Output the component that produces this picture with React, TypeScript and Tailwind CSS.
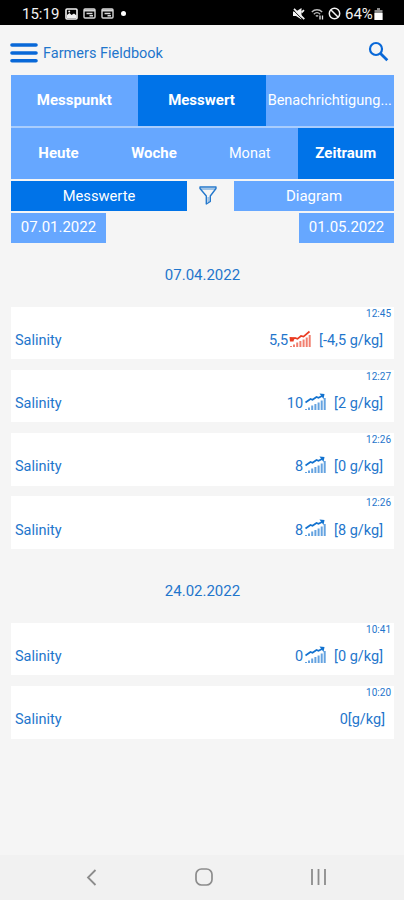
import { clsx } from 'clsx';

type Reading = {
  time: string;
  value: string;
  unit: string;
  trend?: 'up' | 'down';
};

const GROUPS: { date: string; readings: Reading[] }[] = [
  {
    date: '07.04.2022',
    readings: [
      { time: '12:45', value: '5,5', unit: '[-4,5 g/kg]', trend: 'down' },
      { time: '12:27', value: '10', unit: '[2 g/kg]', trend: 'up' },
      { time: '12:26', value: '8', unit: '[0 g/kg]', trend: 'up' },
      { time: '12:26', value: '8', unit: '[8 g/kg]', trend: 'up' },
    ],
  },
  {
    date: '24.02.2022',
    readings: [
      { time: '10:41', value: '0', unit: '[0 g/kg]', trend: 'up' },
      { time: '10:20', value: '0', unit: '[g/kg]' },
    ],
  },
];

function WindowIcon() {
  return (
    <svg width="13" height="11" viewBox="0 0 13 11" fill="none" stroke="#d8d8d8" strokeWidth="1.4">
      <rect x="1" y="1" width="11" height="9" rx="1" />
      <path d="M1 2.500h11" strokeWidth="2" />
      <path d="M3.500 5.500h6M6.500 7.700h3.500" />
    </svg>
  );
}

function StatusBar() {
  return (
    <div className="flex h-[25px] shrink-0 items-center justify-between bg-black pt-[2px] pr-[20px] pl-[22px] text-[#f2f2f2]">
      <div className="flex items-center">
        <span className="w-[43px] pt-[2px] text-[15px] leading-none">15:19</span>
        <svg width="13" height="12" viewBox="0 0 13 12" className="mr-[5px]">
          <rect x="1" y="1" width="11" height="10" rx="1" fill="none" stroke="#f2f2f2" strokeWidth="1.6" />
          <path d="M2 10V7l2.500-2 2 2L9 5.500l2.500 2V10z" fill="#f2f2f2" />
          <circle cx="4.200" cy="3.500" r="1" fill="#f2f2f2" />
        </svg>
        <span className="mr-[5px]"><WindowIcon /></span>
        <WindowIcon />
        <span className="ml-[7px] size-[5px] rounded-full bg-white" />
      </div>
      <div className="flex items-center">
        <svg width="12" height="12" viewBox="0 0 12 12" className="mr-[6px]">
          <path d="M0 3.500h3L8.500 0v11.500L3 8H0z" fill="#f2f2f2" />
          <path d="M0 1.800l10.400 10.400" stroke="#000" strokeWidth="1" />
          <path d="M1 .8l10.300 10.300M8.500 4.500L11 2.200" stroke="#f2f2f2" strokeWidth="1.700" />
        </svg>
        <svg width="13" height="12" viewBox="0 0 13 12" className="mr-[4px]" fill="none" stroke="#bdbdbd" strokeWidth="1.300">
          <path d="M.8 4C3.800 1 8.200 1 11.200 4M2.800 6.200c2-1.900 4.400-1.900 6.400 0M4.800 8.300c.8-.7 1.600-.7 2.400 0" />
          <path d="M9 7.500v4M11.500 7.500v4" stroke="#e8e8e8" />
        </svg>
        <svg width="13" height="13" viewBox="0 0 13 13" className="mr-[4px]" fill="none" stroke="#f2f2f2" strokeWidth="1.500">
          <circle cx="6.500" cy="6.500" r="5.200" />
          <path d="M3 3l7 7" />
        </svg>
        <span className="w-[29px] pt-[2px] text-[15px] leading-none">64%</span>
        <svg width="9" height="12" viewBox="0 0 9 12" className="mr-px">
          <path d="M3 0h3v2h2.500v10h-8V2H3z" fill="#8d8d8d" />
          <path d="M.5 5h8v7h-8z" fill="#fff" />
        </svg>
      </div>
    </div>
  );
}

function Header() {
  return (
    <header className="flex h-[50px] shrink-0 items-center pt-[5px] pr-[15px] pl-[10px]">
      <svg width="28" height="20" viewBox="0 0 28 20" stroke="#0868d8" strokeWidth="3.600" strokeLinecap="round">
        <path d="M2 2h24M2 10h24M2 17.700h24" />
      </svg>
      <h1 className="ml-[5px] flex-1 pt-[3px] text-[14.500px]">Farmers Fieldbook</h1>
      <svg width="21" height="21" viewBox="0 0 21 21" fill="none" stroke="#0868d8" strokeWidth="2.200" className="mb-[3px]">
        <circle cx="8" cy="8" r="6" />
        <path d="M12.500 12.500l6.800 6.800" strokeWidth="2.800" />
      </svg>
    </header>
  );
}

function Tab({ label, active, className }: { label: string; active?: boolean; className?: string }) {
  return (
    <button
      className={clsx(
        'flex h-full items-center justify-center whitespace-nowrap text-white',
        active ? 'bg-[#0073e8]' : 'bg-[#66a7ff]',
        className,
      )}
    >
      {label}
    </button>
  );
}

function Filters() {
  return (
    <div className="mr-[10px] ml-[11px] shrink-0 text-[15px]">
      <div className="bg-[#a9cdfd]">
        <div className="flex h-[51px]">
          <Tab label="Messpunkt" className="w-[126.500px] font-bold" />
          <Tab label="Messwert" active className="w-[128px] font-bold" />
          <Tab label="Benachrichtigung..." className="flex-1 text-[14.500px]" />
        </div>
        <div className="mt-[2px] flex h-[51px]">
          <Tab label="Heute" className="w-[95px] font-bold" />
          <Tab label="Woche" className="w-[96px] font-bold" />
          <Tab label="Monat" className="w-[95.500px] text-[14.500px]" />
          <Tab label="Zeitraum" active className="flex-1 font-bold" />
        </div>
      </div>
      <div className="mt-[2px] flex h-[30px] items-center">
        <Tab label="Messwerte" active className="w-[176px] text-[14.700px]" />
        <div className="flex flex-1 justify-center pr-[5px] pb-px">
          <svg width="18" height="19" viewBox="0 0 18 19" fill="none" stroke="#2478cc" strokeWidth="1.400" strokeLinejoin="round">
            <path d="M1 1h16v1.500L11.300 10v5.500L7.300 18v-8L1 2.500z" />
            <path d="M1.500 3h15" strokeWidth=".8" />
            <path d="M9.300 11v5" strokeWidth="2" opacity=".4" />
          </svg>
        </div>
        <Tab label="Diagram" className="w-[160px]" />
      </div>
      <div className="mt-[2px] flex h-[30px] justify-between">
        <Tab label="07.01.2022" className="w-[95px] pb-px" />
        <Tab label="01.05.2022" className="w-[95px] pb-px" />
      </div>
    </div>
  );
}

function TrendIcon({ trend }: { trend: 'up' | 'down' }) {
  const color = trend === 'up' ? '#1272cf' : '#ea3b22';
  return (
    <svg width="22" height="18" viewBox="0 0 22 18" fill="none" stroke={color}>
      <path d="M2 17v-1M5 17v-2.500M8.200 17v-4.500M11.400 17v-6M14.600 17V9.500M17.700 17V7.500M20.700 17V5" strokeWidth="2" opacity=".65" />
      {trend === 'up' ? (
        <>
          <path d="M1.500 9.500L6.500 6l2 .8L12.500 4l2 .8L19 2.500" strokeWidth="1.700" />
          <path d="M15.500.5L20.500 1l-1 5z" fill={color} stroke="none" />
        </>
      ) : (
        <>
          <path d="M3 9.500L6 8l2.500.8L12 6l2.500.6L20.500 1.500" strokeWidth="1.700" />
          <path d="M.5 7l5 .3L4.500 11.500H1z" fill={color} stroke="none" />
        </>
      )}
    </svg>
  );
}

function ReadingCard({ time, value, unit, trend }: Reading) {
  return (
    <div className="h-[52.600px] bg-white">
      <div className="h-[16px] pr-[3px] text-right text-[10px] leading-[14px]">{time}</div>
      <div className={clsx('flex h-[36px] items-center pl-[4px] text-[14.500px]', trend ? 'pr-[11px]' : 'pr-[9px]')}>
        <span className="flex-1">Salinity</span>
        <span>{value}</span>
        {trend && (
          <span className="mr-[8px] mb-[4px] ml-px">
            <TrendIcon trend={trend} />
          </span>
        )}
        <span>{unit}</span>
      </div>
    </div>
  );
}

function NavBar() {
  return (
    <nav className="flex h-[45px] shrink-0 items-center justify-between bg-[#f1f1f1] pr-[77px] pb-px pl-[86px]">
      <svg width="11" height="17" viewBox="0 0 11 17" fill="none" stroke="#8c8c8c" strokeWidth="1.800">
        <path d="M9.500 1L2 8.500l7.500 7.500" />
      </svg>
      <svg width="18" height="18" viewBox="0 0 18 18" fill="none" stroke="#8c8c8c" strokeWidth="1.700">
        <rect x="1" y="1" width="16" height="16" rx="5.500" />
      </svg>
      <svg width="17" height="16" viewBox="0 0 17 16" stroke="#8c8c8c" strokeWidth="1.800">
        <path d="M2 0v16M8.500 0v16M15 0v16" />
      </svg>
    </nav>
  );
}

export default function App() {
  return (
    <div className="flex h-[900px] w-[404px] flex-col overflow-hidden bg-[#f5f5f5] font-['Roboto',sans-serif] text-[#1f76cc]">
      <StatusBar />
      <Header />
      <Filters />
      <main className="min-h-0 flex-1 overflow-hidden pr-[10px] pl-[11px]">
        {GROUPS.map((group) => (
          <section key={group.date} className="h-[316.300px]">
            <h2 className="flex h-[63.600px] items-center justify-center pt-px text-[15px]">{group.date}</h2>
            <div className="flex flex-col gap-[10.700px]">
              {group.readings.map((reading, i) => (
                <ReadingCard key={i} {...reading} />
              ))}
            </div>
          </section>
        ))}
      </main>
      <NavBar />
    </div>
  );
}
